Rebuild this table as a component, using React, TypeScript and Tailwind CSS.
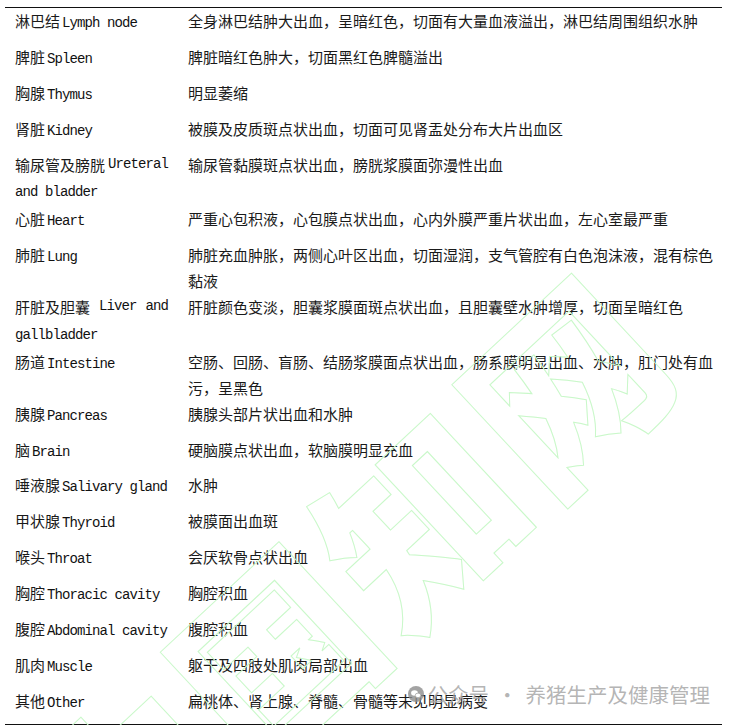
import React from "react";

const En = ({ children }: { children: React.ReactNode }) => (
  <span className="ml-[2px] font-['Liberation_Mono',monospace] text-[14px] tracking-[-0.9px] text-[#111]">{children}</span>
);

type Row = { left: React.ReactNode; right: string[] };

const single = (cn: string, en: string) => (
  <div>
    <span>{cn}</span>
    <En>{en}</En>
  </div>
);

const rows: Row[] = [
  { left: single("淋巴结", "Lymph node"), right: ["全身淋巴结肿大出血，呈暗红色，切面有大量血液溢出，淋巴结周围组织水肿"] },
  { left: single("脾脏", "Spleen"), right: ["脾脏暗红色肿大，切面黑红色脾髓溢出"] },
  { left: single("胸腺", "Thymus"), right: ["明显萎缩"] },
  { left: single("肾脏", "Kidney"), right: ["被膜及皮质斑点状出血，切面可见肾盂处分布大片出血区"] },
  {
    left: (
      <>
        <div className="flex justify-between">
          <span>输尿管及膀胱</span>
          <En>Ureteral</En>
        </div>
        <div className="-ml-[2px]">
          <En>and bladder</En>
        </div>
      </>
    ),
    right: ["输尿管黏膜斑点状出血，膀胱浆膜面弥漫性出血"],
  },
  { left: single("心脏", "Heart"), right: ["严重心包积液，心包膜点状出血，心内外膜严重片状出血，左心室最严重"] },
  { left: single("肺脏", "Lung"), right: ["肺脏充血肿胀，两侧心叶区出血，切面湿润，支气管腔有白色泡沫液，混有棕色", "黏液"] },
  {
    left: (
      <>
        <div className="flex justify-between">
          <span>肝脏及胆囊</span>
          <En>Liver</En>
          <En>and</En>
        </div>
        <div className="-ml-[2px]">
          <En>gallbladder</En>
        </div>
      </>
    ),
    right: ["肝脏颜色变淡，胆囊浆膜面斑点状出血，且胆囊壁水肿增厚，切面呈暗红色"],
  },
  { left: single("肠道", "Intestine"), right: ["空肠、回肠、盲肠、结肠浆膜面点状出血，肠系膜明显出血、水肿，肛门处有血", "污，呈黑色"] },
  { left: single("胰腺", "Pancreas"), right: ["胰腺头部片状出血和水肿"] },
  { left: single("脑", "Brain"), right: ["硬脑膜点状出血，软脑膜明显充血"] },
  { left: single("唾液腺", "Salivary gland"), right: ["水肿"] },
  { left: single("甲状腺", "Thyroid"), right: ["被膜面出血斑"] },
  { left: single("喉头", "Throat"), right: ["会厌软骨点状出血"] },
  { left: single("胸腔", "Thoracic cavity"), right: ["胸腔积血"] },
  { left: single("腹腔", "Abdominal cavity"), right: ["腹腔积血"] },
  { left: single("肌肉", "Muscle"), right: ["躯干及四肢处肌肉局部出血"] },
  { left: single("其他", "Other"), right: ["扁桃体、肾上腺、脊髓、骨髓等末见明显病变"] },
];

export default function App() {
  return (
    <div className="relative w-[734px] h-[725px] overflow-hidden bg-white font-['Noto_Sans_CJK_SC',sans-serif] text-[15px] text-[#1a1a1a]">
      <div className="ml-[5px] mt-[7px] w-[717px] border-t-[1.5px] border-b-[1.5px] border-[#111]">
        {rows.map((r, i) => (
          <div key={i} className="flex min-h-[35.9px] leading-[25.9px]">
            <div className="w-[173px] shrink-0 pl-[10px] pr-[10px] whitespace-nowrap">{r.left}</div>
            <div className="pl-[10px] whitespace-nowrap">
              {r.right.map((l, j) => (
                <div key={j}>{l}</div>
              ))}
            </div>
          </div>
        ))}
      </div>

      {/* green watermark */}
      <svg className="pointer-events-none absolute left-0 top-0" width="734" height="725" viewBox="0 0 734 725">
        <text
          x="345"
          y="580"
          transform="rotate(-43 345 580)"
          textAnchor="middle"
          dominantBaseline="central"
          fontSize="190"
          fontWeight="900"
          fontFamily="'Noto Sans CJK SC', sans-serif"
          letterSpacing="8"
          fill="none"
          stroke="#c9f8c9"
          strokeWidth="1"
        >
          中国知网
        </text>
      </svg>

      {/* wechat watermark */}
      <div className="pointer-events-none absolute right-[24px] top-[680px] flex items-center h-[28px] text-[20.5px] leading-[28px] text-[#a8a8a8]/85">
        <svg width="16" height="16" viewBox="0 0 16 16" className="mr-[4px]">
          <circle cx="8" cy="8" r="8" fill="#8c8c8c" fillOpacity="0.8" />
          <ellipse cx="6.5" cy="7" rx="3.4" ry="2.8" fill="#fff" />
          <ellipse cx="10" cy="9.4" rx="2.8" ry="2.3" fill="#fff" stroke="#8c8c8c" strokeWidth="0.6" />
        </svg>
        <span>公众号</span>
        <span className="mx-[8px]">·</span>
        <span>养猪生产及健康管理</span>
      </div>
    </div>
  );
}
